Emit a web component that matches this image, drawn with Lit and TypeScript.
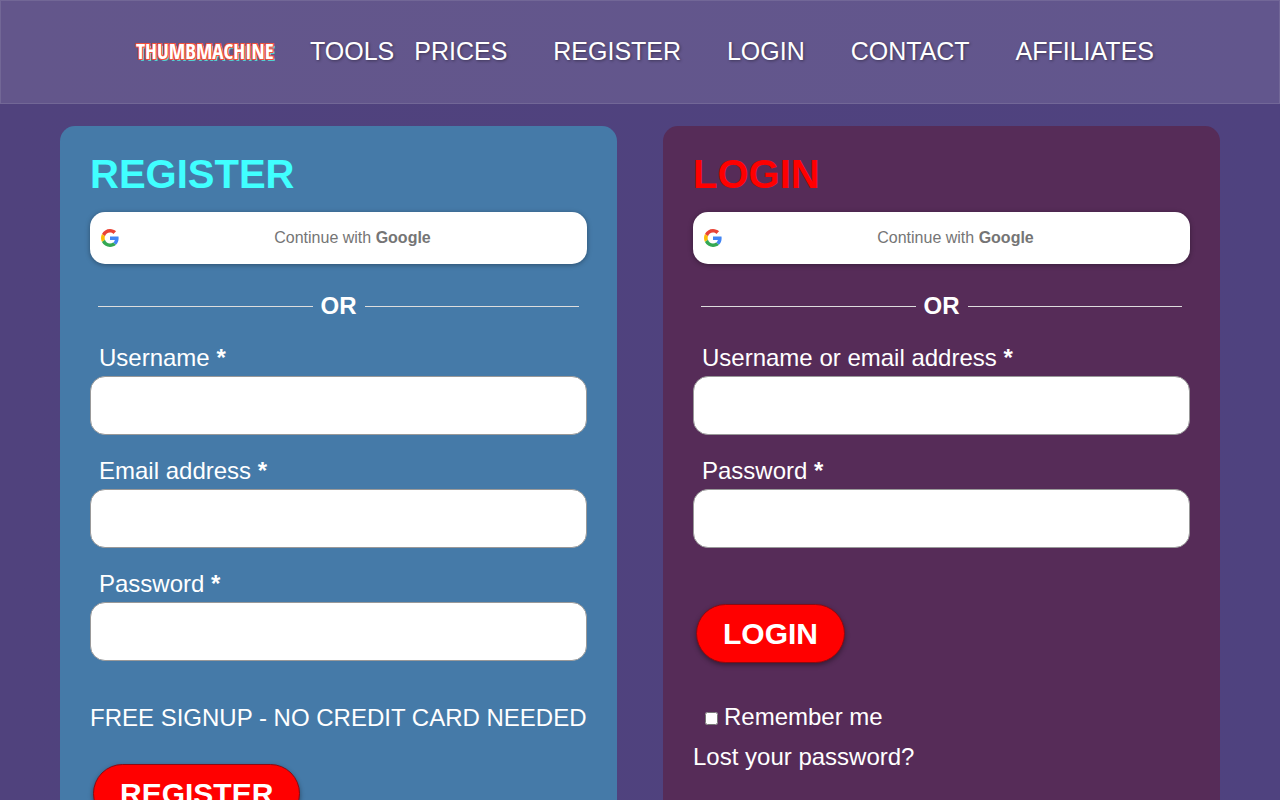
import { LitElement, html, css, svg } from "lit";
import { customElement } from "lit/decorators.js";

const googleMark = svg`
  <path fill="#EA4335" d="M24 9.5c3.54 0 6.71 1.22 9.21 3.6l6.85-6.85C35.9 2.38 30.47 0 24 0 14.62 0 6.51 5.38 2.56 13.22l7.98 6.19C12.43 13.72 17.74 9.5 24 9.5z"/>
  <path fill="#4285F4" d="M46.98 24.55c0-1.57-.15-3.09-.38-4.55H24v9.02h12.94c-.58 2.96-2.26 5.48-4.78 7.18l7.73 6c4.51-4.18 7.09-10.36 7.09-17.65z"/>
  <path fill="#FBBC05" d="M10.53 28.59c-.48-1.45-.76-2.99-.76-4.59s.27-3.14.76-4.59l-7.98-6.19C.92 16.46 0 20.12 0 24c0 3.88.92 7.54 2.56 10.78l7.97-6.19z"/>
  <path fill="#34A853" d="M24 48c6.48 0 11.93-2.13 15.89-5.81l-7.73-6c-2.15 1.45-4.92 2.3-8.16 2.3-6.26 0-11.57-4.22-13.47-9.91l-7.98 6.19C6.51 42.62 14.62 48 24 48z"/>`;

@customElement("app-root")
export class AppRoot extends LitElement {
  static styles = css`
    * { box-sizing: border-box; }
    :host {
      display: block;
      min-height: 100vh;
      color: #fff;
      font-family: "Liberation Sans", Arial, sans-serif;
      font-size: 24px;
      line-height: 40px;
      background: linear-gradient(90deg, #50427d 0%, #4f427f 100%);
    }
    a { color: inherit; text-decoration: none; }
    .header {
      display: flex;
      align-items: center;
      height: 104px;
      padding: 0 125px 2px 135px;
      background: rgba(255, 255, 255, 0.11);
      border: 1px solid rgba(255, 255, 255, 0.1);
    }
    .logo {
      flex: none;
      width: 174px;
      font-family: "Open Sans Condensed", "Liberation Sans Narrow", sans-serif;
      font-size: 21px;
      text-shadow: -1px -1px #f0503c, 1px -1px #f0503c, -1px 1px #f0503c, 1px 1px #f0503c, 2px 2px #4fd0d0;
    }
    .nav {
      display: flex;
      flex: 1;
      justify-content: space-between;
      font-size: 25px;
      text-shadow: 1px 1px 3px rgba(0, 0, 0, 0.4);
    }
    .pair { display: flex; gap: 20px; }
    .forms {
      display: grid;
      grid-template-columns: 1fr 1fr;
      gap: 46px;
      padding: 22px 60px 40px;
    }
    .card {
      padding: 24px 30px;
      border-radius: 15px;
    }
    .register { background: #457aa8; }
    .login { background: #562c58; }
    .title { margin: 0 0 14px; font-size: 40px; line-height: 48px; }
    .register .title { color: #40ffff; }
    .login .title { color: #f00; }
    .google {
      display: grid;
      grid-template-columns: 18px 1fr;
      column-gap: 10px;
      align-items: center;
      width: 100%;
      height: 52px;
      padding: 0 11px;
      border: 0;
      border-radius: 15px;
      background: #fff;
      color: #757575;
      font: 16px/24px "Liberation Sans", Arial, sans-serif;
      box-shadow: 0 1px 5px rgba(0, 0, 0, 0.35);
    }
    .or {
      display: flex;
      align-items: center;
      gap: 8px;
      margin: 22px 8px 12px;
      font-weight: bold;
    }
    .or::before, .or::after {
      content: "";
      flex: 1;
      height: 1px;
      background: #ddd;
    }
    .field { margin-bottom: 16px; }
    .field label { display: block; height: 38px; padding: 0 9px; }
    .field input {
      display: block;
      width: 100%;
      height: 59px;
      padding: 0 16px;
      border: 1px solid #999;
      border-radius: 15px;
      font: inherit;
      background: #fff;
    }
    .note { margin: 37px 0 26px; }
    .submit {
      display: block;
      height: 59px;
      margin: 0 3px;
      padding: 0 26px;
      border: 1px solid #8a0a12;
      border-radius: 30px;
      background: #f00;
      color: #fff;
      font: bold 30px/40px "Liberation Sans", Arial, sans-serif;
      box-shadow: 0 2px 5px rgba(0, 0, 0, 0.4);
    }
    .login .submit { margin-top: 56px; margin-bottom: 34px; }
    .remember { display: flex; align-items: center; gap: 6px; padding-left: 12px; }
    .remember input { width: 13px; height: 13px; margin: 3px 0 0; }
  `;

  private google() {
    return html`<button class="google" type="button">
      <svg width="18" height="18" viewBox="0 0 48 48" aria-hidden="true">${googleMark}</svg>
      <span>Continue with <b>Google</b></span>
    </button>`;
  }

  private field(id: string, label: string, type = "text") {
    return html`<div class="field">
      <label for=${id}>${label} <b>*</b></label>
      <input id=${id} type=${type} required />
    </div>`;
  }

  render() {
    return html`
      <header class="header">
        <a class="logo" href="#">THUMBMACHINE</a>
        <nav class="nav">
          <span class="pair"><a href="#">TOOLS</a><a href="#">PRICES</a></span>
          <a href="#">REGISTER</a>
          <a href="#">LOGIN</a>
          <a href="#">CONTACT</a>
          <a href="#">AFFILIATES</a>
        </nav>
      </header>
      <main class="forms">
        <form class="card register">
          <h2 class="title">REGISTER</h2>
          ${this.google()}
          <div class="or">OR</div>
          ${this.field("reg-user", "Username")}
          ${this.field("reg-email", "Email address", "email")}
          ${this.field("reg-pass", "Password", "password")}
          <p class="note">FREE SIGNUP - NO CREDIT CARD NEEDED</p>
          <button class="submit" type="button">REGISTER</button>
        </form>
        <form class="card login">
          <h2 class="title">LOGIN</h2>
          ${this.google()}
          <div class="or">OR</div>
          ${this.field("log-user", "Username or email address")}
          ${this.field("log-pass", "Password", "password")}
          <button class="submit" type="button">LOGIN</button>
          <label class="remember"><input type="checkbox" />Remember me</label>
          <a href="#">Lost your password?</a>
        </form>
      </main>
    `;
  }
}
